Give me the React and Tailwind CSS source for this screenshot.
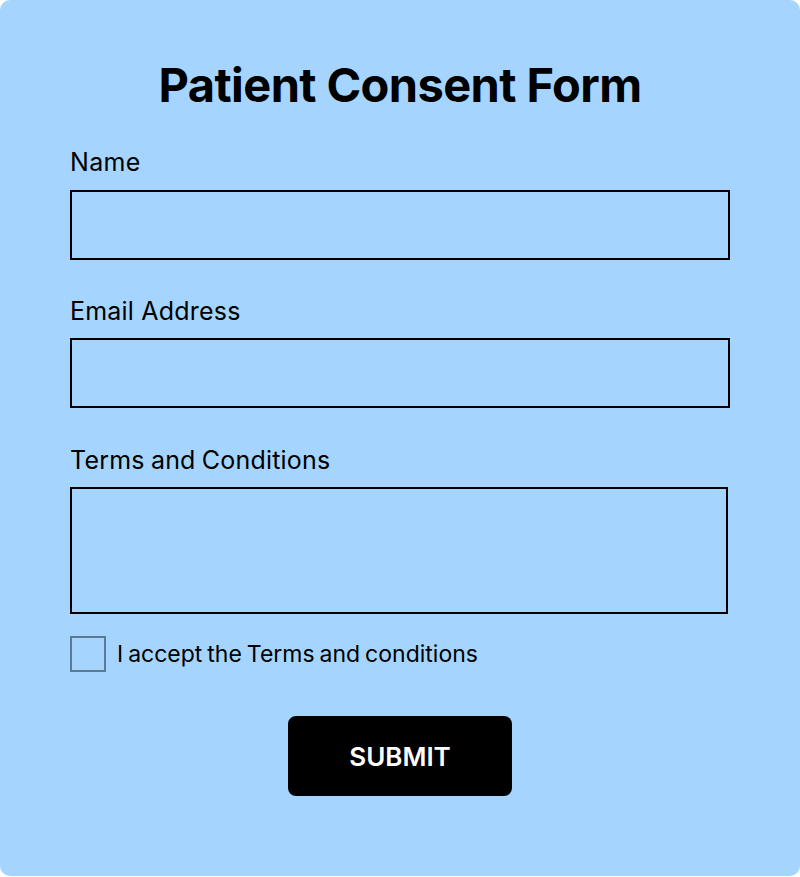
export default function App() {
  const font = { fontFamily: "Inter, 'Noto Sans', sans-serif" };
  return (
    <div className="w-[800px] h-[877px] bg-white" style={font}>
      <div className="w-[800px] h-[876px] rounded-[10px] bg-[#a5d5fe] flex flex-col px-[70px]">
        <h1 className="pt-[56px] text-center text-[47px] leading-[58px] font-bold text-black tracking-[-0.6px]">
          Patient Consent Form
        </h1>
        <label className="mt-[32px] text-[25px] leading-[32px] text-black tracking-[0.3px]">Name</label>
        <input className="mt-[12px] w-[660px] h-[70px] border-2 border-black bg-transparent outline-none" />
        <label className="mt-[35px] text-[25px] leading-[32px] text-black tracking-[0.2px]">Email Address</label>
        <input className="mt-[11px] w-[660px] h-[70px] border-2 border-black bg-transparent outline-none" />
        <label className="mt-[36px] text-[25px] leading-[32px] text-black tracking-[0.2px] [word-spacing:-1px]">Terms and Conditions</label>
        <textarea className="mt-[11px] w-[658px] h-[127px] border-2 border-black bg-transparent outline-none resize-none" />
        <div className="mt-[22px] flex items-center gap-[11px]">
          <div className="w-[36px] h-[36px] border-2 border-[#5b7a93]" />
          <span className="text-[23px] leading-[32px] text-black [word-spacing:-1.5px]">I accept the Terms and conditions</span>
        </div>
        <div className="mt-[44px] flex justify-center">
          <button className="w-[224px] h-[80px] rounded-[8px] bg-black text-white text-[26px] font-semibold">
            SUBMIT
          </button>
        </div>
      </div>
    </div>
  );
}
